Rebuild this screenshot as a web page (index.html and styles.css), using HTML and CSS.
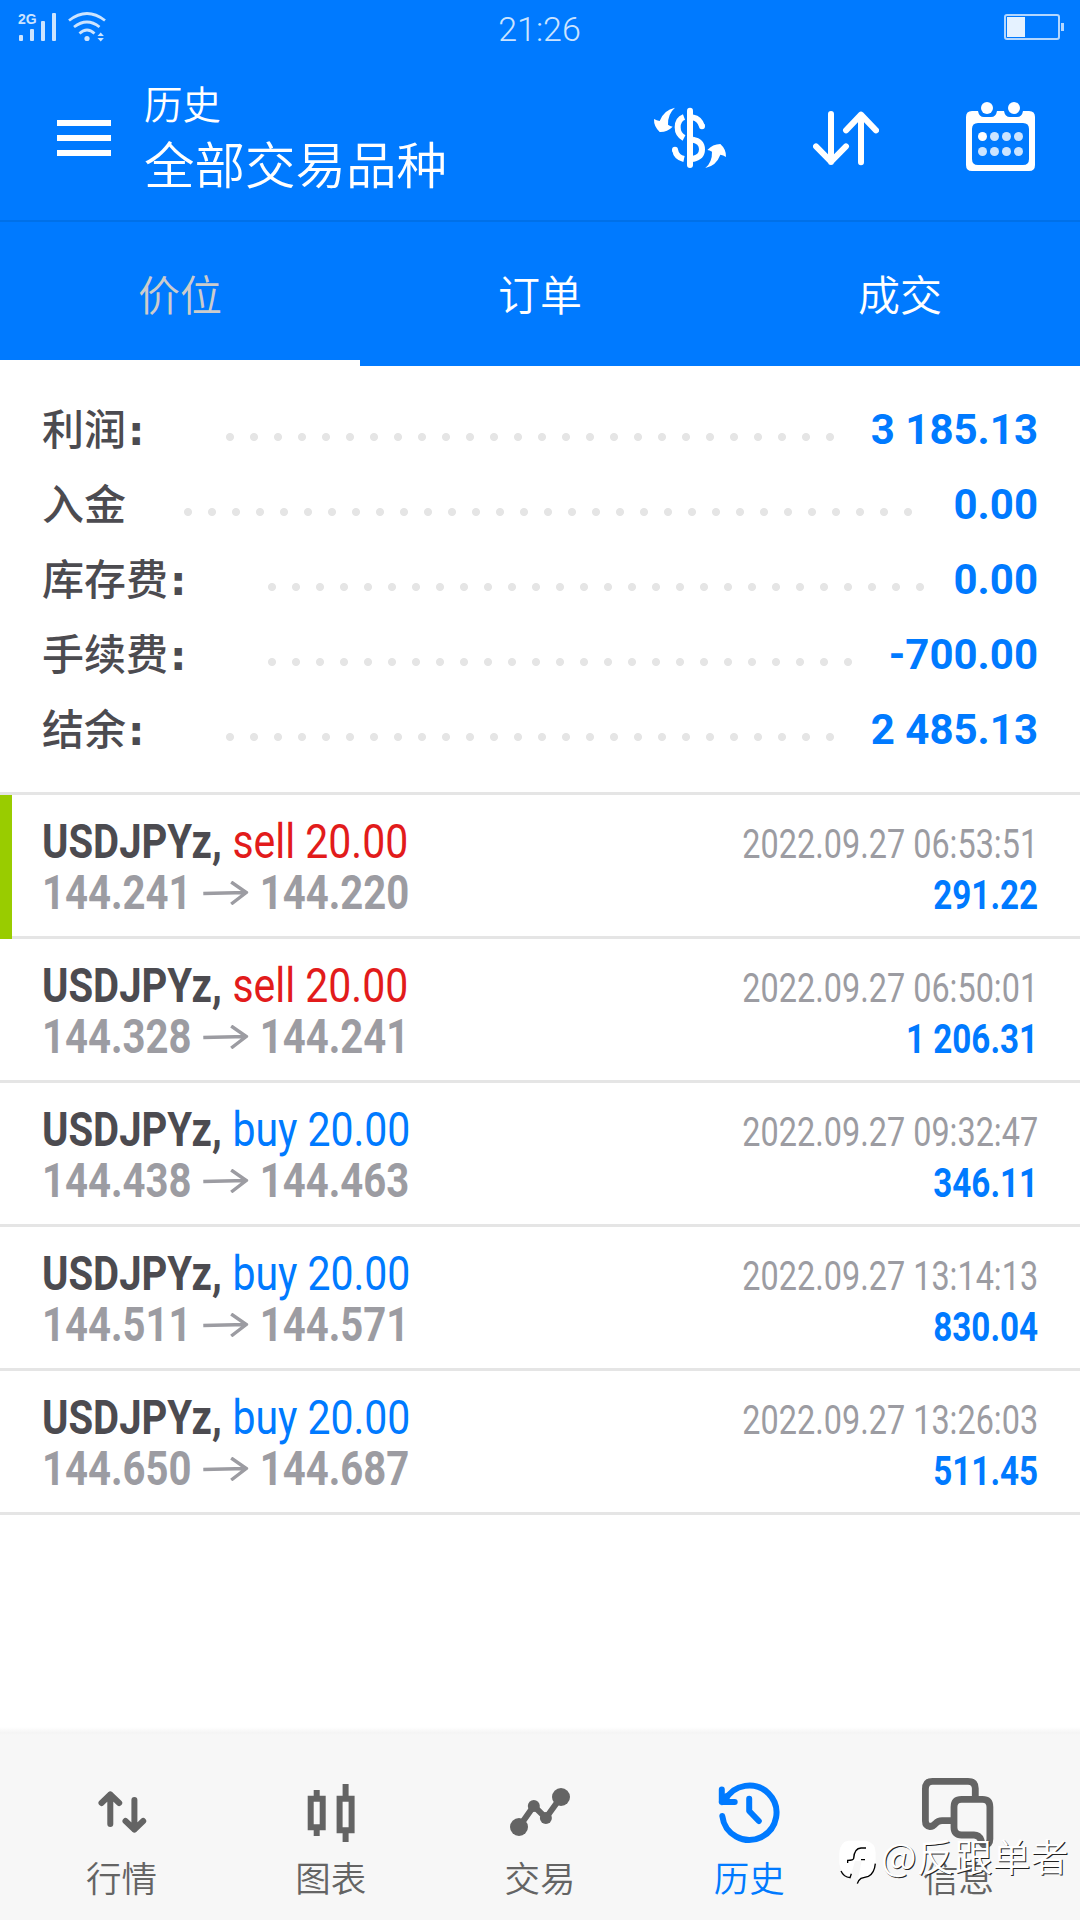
FILE: index.html
```html
<!DOCTYPE html>
<html lang="zh-CN">
<head>
<meta charset="utf-8">
<title>历史</title>
<link rel="stylesheet" href="styles.css">
</head>
<body>
<div class="app">
  <div class="status">
    <div class="status-left">
      <svg class="signal" width="40" height="30" viewBox="0 0 40 30" fill="#cce4ff"><text class="net" x="0" y="11.500">2G</text><rect x="1" y="23" width="4" height="6" rx="1"/><rect x="12" y="17" width="4" height="12" rx="1"/><rect x="23" y="9" width="4" height="20" rx="1"/><rect x="34" y="1" width="4" height="28" rx="1"/></svg>
      <svg width="38" height="30" viewBox="0 0 38 30" fill="none" stroke="#cce4ff" stroke-width="2.8"><path d="M1 8.500Q19-5.500 37 8.500M6 15Q19 5 31.500 15M11.500 21.500Q19 14.500 26.500 21.500"/><circle cx="19" cy="26.500" r="2.600" fill="#cce4ff" stroke="none"/><path d="M29.500 24l3.200-3.500 3.200 3.500zM29.500 26l3.200 3.500 3.200-3.500z" fill="#cce4ff" stroke="none"/></svg>
    </div>
    <div class="clock">21:26</div>
    <svg class="battery" width="60" height="26" viewBox="0 0 60 26"><rect x="1" y="1" width="54" height="24" rx="2" fill="none" stroke="#b3d7ff" stroke-width="2"/><rect x="3" y="3" width="18" height="20" fill="#e5f2ff"/><rect x="57" y="9" width="3" height="8" fill="#b3d7ff"/></svg>
  </div>
  <header class="bar">
    <svg class="menu" width="54" height="36" viewBox="0 0 54 36" fill="#fff"><path d="M0 0h54v6H0zM0 15h54v6H0zM0 30h54v6H0z"/></svg>
    <div class="titles">
      <div class="title">历史</div>
      <div class="subtitle">全部交易品种</div>
    </div>
    <div class="actions">
      <svg width="74" height="62" viewBox="159 321 222 186" fill="none" stroke="#fff" stroke-linecap="round">
        <path d="M270 332V495" stroke-width="18"/>
        <path d="M252 351Q233 358 233 382Q233 404 252 414M278 352Q300 356 306 379M278 419Q306 424 306 448Q306 472 278 477M252 477Q229 472 225 449" stroke-width="18" stroke-linecap="butt"/>
        <path d="M306 379v0M225 449v0" stroke-width="18"/>
        <path d="M225 323Q191 330 179 363Q170 362 162 357Q161 379 179 396Q201 397 218 380Q210 378 204 374Q203 342 225 323ZM316 504Q349 497 361 464Q370 465 378 471Q379 448 361 432Q338 432 322 450Q329 451 336 455Q337 486 316 504Z" fill="#fff" stroke="none"/>
      </svg>
      <svg width="66" height="55" viewBox="639 332 198 165" fill="none" stroke="#fff" stroke-width="18" stroke-linecap="round" stroke-linejoin="round"><path d="M693 341V485M648 438L693 484L738 438M783 486V343M738 390L783 343L828 390"/></svg>
      <svg class="calendar" width="69" height="69" viewBox="0 0 69 69"><path d="M6 9H12Q13 15 18 15H25Q30 15 31 9H38Q39 15 44 15H51Q56 15 57 9H63Q69 9 69 15V63Q69 69 63 69H6Q0 69 0 63V15Q0 9 6 9ZM12 21Q6 21 6 27V57Q6 63 12 63H57Q63 63 63 57V27Q63 21 57 21Z" fill="#fff" fill-rule="evenodd"/><g fill="#fff"><circle cx="21" cy="6" r="6"/><circle cx="48" cy="6" r="6"/><circle cx="16.500" cy="34.500" r="4.500"/></g><g fill="#cce4ff"><circle cx="28.500" cy="34.500" r="4.500"/><circle cx="40.500" cy="34.500" r="4.500"/><circle cx="52.500" cy="34.500" r="4.500"/><circle cx="16.500" cy="49.500" r="4.500"/><circle cx="28.500" cy="49.500" r="4.500"/><circle cx="40.500" cy="49.500" r="4.500"/><circle cx="52.500" cy="49.500" r="4.500"/></g></svg>
    </div>
  </header>
  <nav class="tabs">
    <div class="tab active">价位</div>
    <div class="tab">订单</div>
    <div class="tab">成交</div>
  </nav>
  <section class="summary">
    <div class="sum"><span class="label">利润<i>:</i></span><span class="dots" style="width:624px"></span><span class="val">3 185.13</span></div>
    <div class="sum"><span class="label">入金</span><span class="dots" style="width:744px"></span><span class="val">0.00</span></div>
    <div class="sum"><span class="label">库存费<i>:</i></span><span class="dots" style="width:672px"></span><span class="val">0.00</span></div>
    <div class="sum"><span class="label">手续费<i>:</i></span><span class="dots" style="width:600px"></span><span class="val">-700.00</span></div>
    <div class="sum"><span class="label">结余<i>:</i></span><span class="dots" style="width:624px"></span><span class="val">2 485.13</span></div>
  </section>
  <main class="deals">
    <div class="deal marked">
      <div class="left"><div class="sym"><b>USDJPYz,</b><span class="sell">sell 20.00</span></div><div class="price"><span>144.241</span><svg class="arrow" viewBox="0 0 45 24" preserveAspectRatio="none"><path d="M0 12.500L43 11.500M28 1L43 11.500L28 23"/></svg><span>144.220</span></div></div>
      <div class="right"><div class="date">2022.09.27 06:53:51</div><div class="profit">291.22</div></div>
    </div>
    <div class="deal">
      <div class="left"><div class="sym"><b>USDJPYz,</b><span class="sell">sell 20.00</span></div><div class="price"><span>144.328</span><svg class="arrow" viewBox="0 0 45 24" preserveAspectRatio="none"><path d="M0 12.500L43 11.500M28 1L43 11.500L28 23"/></svg><span>144.241</span></div></div>
      <div class="right"><div class="date">2022.09.27 06:50:01</div><div class="profit">1 206.31</div></div>
    </div>
    <div class="deal">
      <div class="left"><div class="sym"><b>USDJPYz,</b><span class="buy">buy 20.00</span></div><div class="price"><span>144.438</span><svg class="arrow" viewBox="0 0 45 24" preserveAspectRatio="none"><path d="M0 12.500L43 11.500M28 1L43 11.500L28 23"/></svg><span>144.463</span></div></div>
      <div class="right"><div class="date">2022.09.27 09:32:47</div><div class="profit">346.11</div></div>
    </div>
    <div class="deal">
      <div class="left"><div class="sym"><b>USDJPYz,</b><span class="buy">buy 20.00</span></div><div class="price"><span>144.511</span><svg class="arrow" viewBox="0 0 45 24" preserveAspectRatio="none"><path d="M0 12.500L43 11.500M28 1L43 11.500L28 23"/></svg><span>144.571</span></div></div>
      <div class="right"><div class="date">2022.09.27 13:14:13</div><div class="profit">830.04</div></div>
    </div>
    <div class="deal">
      <div class="left"><div class="sym"><b>USDJPYz,</b><span class="buy">buy 20.00</span></div><div class="price"><span>144.650</span><svg class="arrow" viewBox="0 0 45 24" preserveAspectRatio="none"><path d="M0 12.500L43 11.500M28 1L43 11.500L28 23"/></svg><span>144.687</span></div></div>
      <div class="right"><div class="date">2022.09.27 13:26:03</div><div class="profit">511.45</div></div>
    </div>
  </main>
  <footer class="nav">
    <div class="item"><svg viewBox="0 0 72 72" fill="none" stroke="currentColor" stroke-width="6" stroke-linecap="round" stroke-linejoin="round"><path d="M24.300 47V17.500M15.500 26L24.300 17.500L33.200 26M48.400 23V52.500M39.500 44L48.400 52.500L57.200 44"/></svg><span>行情</span></div>
    <div class="item"><svg viewBox="0 0 72 72" fill="none" stroke="currentColor" stroke-width="6"><path d="M15.700 21.700h12v28.600h-12zM44.600 21.700h12v31.600h-12zM21.700 13v6M21.700 53v6M50.600 7v12M50.600 56v9"/></svg><span>图表</span></div>
    <div class="item"><svg viewBox="0 0 72 72" fill="currentColor"><path d="M15 50L29.800 29L41.900 41L57 20" fill="none" stroke="currentColor" stroke-width="6"/><circle cx="15" cy="50" r="9"/><circle cx="29.800" cy="29" r="6"/><circle cx="41.900" cy="41" r="6"/><circle cx="57" cy="20" r="9"/></svg><span>交易</span></div>
    <div class="item on"><svg viewBox="0 0 72 72" fill="none" stroke="currentColor" stroke-width="6" stroke-linecap="round" stroke-linejoin="round"><path d="M9.300 39A27.200 27.200 0 1 0 12 23.500M8.800 12.500V25H21.700M8.800 25L14 19M36.200 21.700V34L45.800 44"/></svg><span>历史</span></div>
    <div class="item"><svg viewBox="0 0 72 72" fill="none" stroke="currentColor" stroke-width="6.800"><path d="M53.300 20V11.500Q53.300 4.300 46 4.300H10.500Q3.400 4.300 3.400 12V44Q3.400 49 8 49.500Q11 49.500 13.500 46.500Q16 43.700 20 43.700H31M39.500 22.300H60.500Q67.900 22.300 67.900 30V62Q67.900 68 62 68Q60 67 59 63Q57 58 52 58H39.500Q32 58 32 50.500V30Q32 22.300 39.500 22.300Z"/></svg><span>信息</span></div>
  </footer>
  <div class="watermark">
    <svg width="50" height="55" viewBox="0 0 150 165"><path d="M40 17H92Q122 22 122 54V88Q118 122 92 124Q78 126 70 134L62 122L46 124Q18 118 13 86V52Q16 20 40 17Z" fill="#fff"/><path d="M60 78L45 130L66 146L80 78Z" fill="#f7f7f7"/><path d="M38 84V76Q55 76 56 70Q58 40 78 39H93M78 74H90M18 108Q26 126 45 128L49 116M121 86Q118 116 100 124L78 130Q70 135 67 146" fill="none" stroke="#000" stroke-width="4"/></svg>
    <span>@反跟单者</span>
  </div>
</div>
</body>
</html>
```
FILE: styles.css
```css
* { box-sizing: border-box; }
body { margin: 0; background: #fff; font-family: Roboto, "Noto Sans CJK SC", sans-serif; }
svg { display: block; flex: none; }
.app { position: relative; width: 1080px; height: 1920px; display: flex; flex-direction: column; overflow: hidden; }

.status { height: 56px; flex: none; background: #007aff; display: grid; grid-template-columns: 1fr auto 1fr; align-items: start; padding: 12px 19px 0 18px; }
.status-left { display: flex; gap: 10px; }
.signal { overflow: visible; }
.net { font: bold 14px "Liberation Sans", sans-serif; }
.clock { font-size: 34px; font-weight: 300; line-height: 35px; color: #cce4ff; }
.battery { justify-self: end; margin: 2px -3px 0 0; }

.bar { height: 166px; flex: none; background: #007aff; border-bottom: 2px solid #0070e8; display: flex; align-items: center; padding: 0 45px 0 57px; color: #fff; font-weight: 350; }
.titles { margin: 12px 0 0 33px; }
.title { font-size: 38.500px; line-height: 46px; }
.subtitle { font-size: 50.500px; line-height: 76px; }
.actions { margin-left: auto; display: flex; align-items: center; gap: 87px; }
.actions svg:first-child { margin-right: -1px; }
.calendar { margin-bottom: 4px; }

.tabs { height: 144px; flex: none; background: #007aff; display: grid; grid-template-columns: repeat(3, 1fr); color: #fff; font-weight: 350; }
.tab { font-size: 42px; line-height: 149px; text-align: center; height: 144px; }
.active { color: #ccc; border-bottom: 6px solid #fff; }

.summary { height: 429px; flex: none; border-bottom: 3px solid #e5e5e5; padding: 26px 42px 0; }
.sum { display: flex; height: 75px; line-height: 75px; font-size: 42px; font-weight: 700; }
.label { color: #4c4b50; font-weight: 500; line-height: 77px; }
.label i { display: inline-block; width: 42px; padding-left: 2px; font: bold 41px/75px "DejaVu Sans", sans-serif; }
.dots { margin-left: 50px; height: 24px; margin-top: 33px; background: radial-gradient(circle, #e5e5e5 3.600px, transparent 4.400px) 0 0 / 24px 24px; }
.val { margin-left: auto; color: #007aff; }

.deal { height: 144px; border-bottom: 3px solid #e5e5e5; display: flex; justify-content: space-between; padding: 0 42px; position: relative; }
.marked::before { content: ""; position: absolute; left: 0; top: 0; width: 12px; height: 144px; background: #9c0; }
.left { padding-top: 21px; font-size: 48px; line-height: 51px; }
.sym, .price { display: flex; white-space: nowrap; transform: scaleX(.835); transform-origin: left; color: #4c4b50; }
.sym b { margin-right: 13px; }
.sym span { transform: scaleX(1.022); transform-origin: left; font-weight: 450; }
.sym .sell { color: #e21b1b; }
.sym .buy { color: #007aff; }
.price { color: #9c9ca2; font-weight: 700; }
.arrow { width: 54px; height: 24px; margin: 14px 13.5px 0 14px; fill: none; stroke: #9c9ca2; stroke-width: 3.4; }
.right { padding-top: 24px; font-size: 40px; line-height: 51px; text-align: right; white-space: nowrap; }
.date, .profit { transform: scaleX(.81); transform-origin: right; }
.date { color: #9c9ca2; font-weight: 450; }
.profit { color: #007aff; font-weight: 700; transform: scaleX(.83); }

.nav { margin-top: auto; height: 193px; background: linear-gradient(#fff, #f4f4f4 6px, #f7f7f7 8px); display: grid; grid-template-columns: repeat(5, 1fr); padding: 50px 17px 0; color: #646464; }
.item { display: flex; flex-direction: column; align-items: center; font-size: 35.500px; font-weight: 350; line-height: 62px; }
.item svg { width: 72px; height: 72px; }
.on { color: #007aff; }

.watermark { position: absolute; left: 835px; top: 1835px; display: flex; color: #fff; font-size: 38px; line-height: 40px; font-weight: 350; font-family: "Noto Sans CJK SC", sans-serif; text-shadow: 1px 1px 0 #222; white-space: nowrap; }
.watermark span { margin-left: -4px; }
```
